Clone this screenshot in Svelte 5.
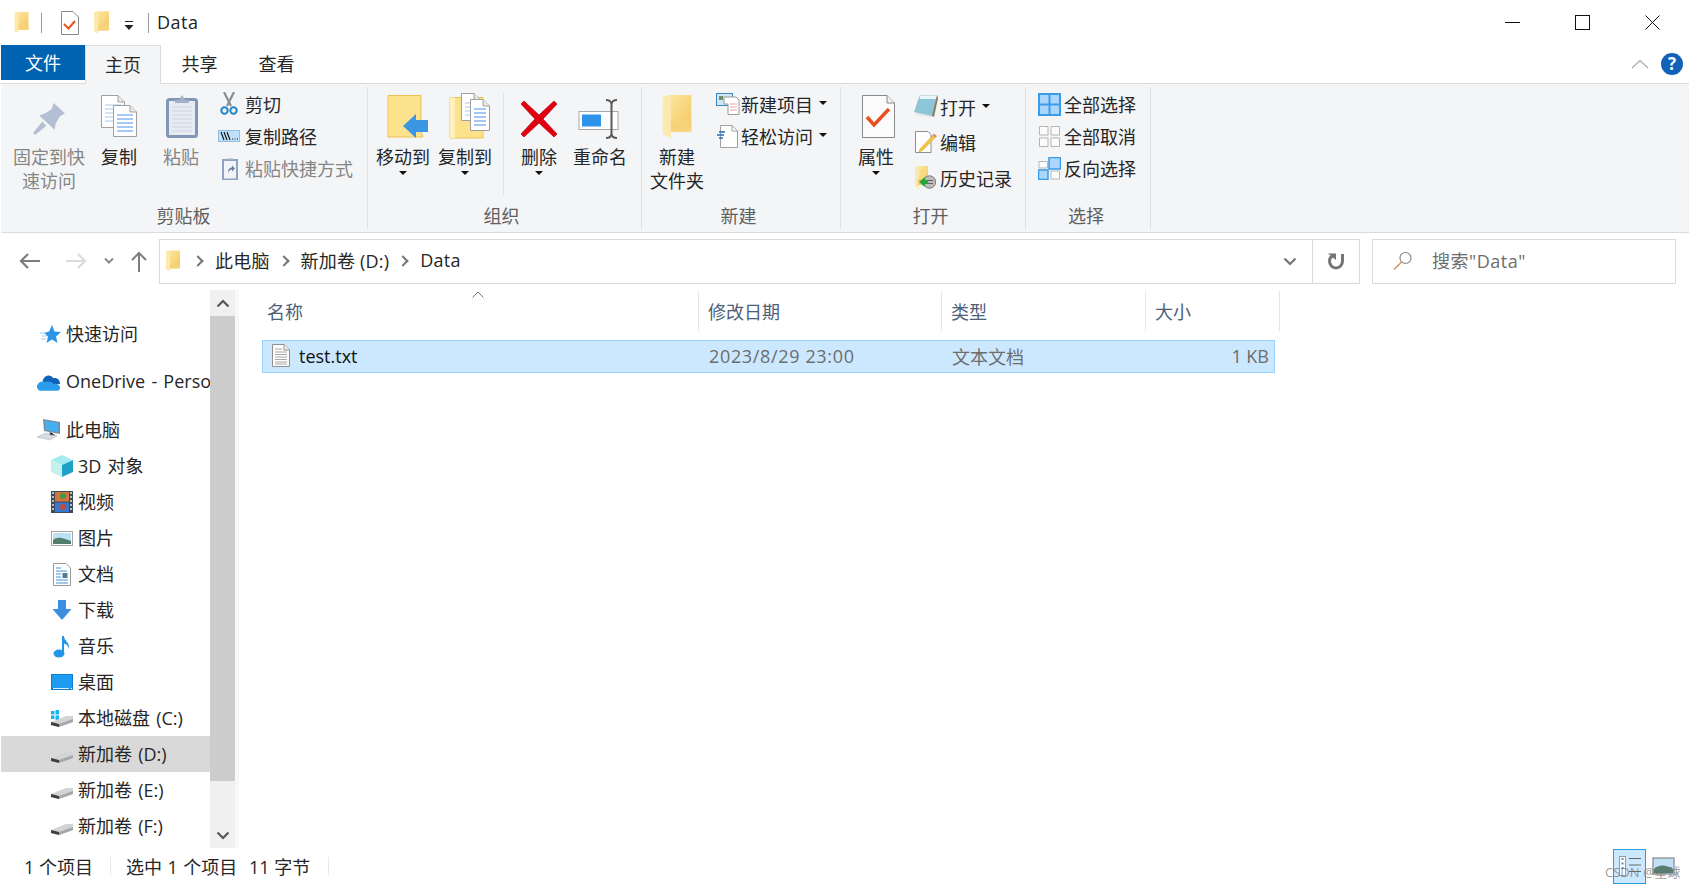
<script>
	const colHeads = [
		{ label: '名称', cls: 'c-name' },
		{ label: '修改日期', cls: 'c-date' },
		{ label: '类型', cls: 'c-type' },
		{ label: '大小', cls: 'c-size' }
	];
</script>

{#snippet folder(w, h)}
	<svg width={w} height={h} viewBox="0 0 28 42">
		<path d="M6 0H28V30H6z" fill="url(#fold)" />
		<path d="M20 30H28V35L8 36V30z" fill="#f2cd70" />
		<path d="M0 1.5L8 0V42L0 38z" fill="#fde9ae" />
		<path d="M8 26H28V36H8z" fill="#f6d27a" />
	</svg>
{/snippet}

{#snippet pin()}
	<svg width="32" height="32" viewBox="0 0 31 31">
		<path d="M20 0L31 10L26 13L22 20L21 26L6 12L12 10L18 6z" fill="#b3c0d3" />
		<path d="M9 18L0 29L2 31L13 22z" fill="#b3c0d3" />
	</svg>
{/snippet}

{#snippet page(x, y, w, h, color)}
	<path d="M{x + 0.5} {y + 0.5}H{x + w - 7}L{x + w - 0.5} {y + 7}V{y + h - 0.5}H{x + 0.5}z" fill="#fff" stroke="#a0a0a0" />
	<path d="M{x + w - 7} {y + 0.5}V{y + 7}H{x + w - 0.5}" fill="#e8e8e8" stroke="#a0a0a0" />
	{#each [10, 14, 18, 22, 26, 30, 34].filter((n) => n < h - 3) as n}
		<path d="M{x + 4} {y + n}H{x + w - 4}" stroke={color} stroke-width="1.4" />
	{/each}
{/snippet}

{#snippet copyIcon()}
	<svg width="38" height="44" viewBox="0 0 38 44">
		{@render page(1, 1, 24, 33, '#c3d7f5')}
		{@render page(13, 11, 24, 32, '#7fb0f2')}
	</svg>
{/snippet}

{#snippet pasteIcon()}
	<svg width="32" height="44" viewBox="0 0 32 44">
		<rect x="1.5" y="5.5" width="29" height="37" rx="2" fill="#e7ebf3" stroke="#8396b6" stroke-width="3" />
		{#each [13, 17, 21, 25, 29, 33, 37] as n}
			<path d="M6 {n}H26" stroke="#cfd6e4" />
		{/each}
		<path d="M9 9V6H13L16 1L19 6H23V9z" fill="#a3b1c8" />
	</svg>
{/snippet}

{#snippet scissors()}
	<svg class="ico-scissors" width="18" height="24" viewBox="0 0 18 24">
		<path d="M4 0L11 14M14 0L7 14" stroke="#8a8f96" stroke-width="2.2" />
		<circle cx="4.500" cy="18.500" r="3.200" fill="none" stroke="#1f86c7" stroke-width="2" />
		<circle cx="13.500" cy="18.500" r="3.200" fill="none" stroke="#1f86c7" stroke-width="2" />
	</svg>
{/snippet}

{#snippet copyPath()}
	<svg width="22" height="12" viewBox="0 0 22 12">
		<rect x="0.5" y="0.5" width="21" height="11" fill="#bfe0f8" stroke="#8fbfe2" />
		<path d="M3 2L6 10M6 2L9 10M9 2L12 10" stroke="#111" stroke-width="1.1" />
		<path d="M14 9h1M16.500 9h1M19 9h1" stroke="#111" />
	</svg>
{/snippet}

{#snippet shortcut()}
	<svg class="ico-shortcut" width="16" height="23" viewBox="0 0 16 23">
		<rect x="1" y="3" width="14" height="19.500" fill="#f0f3f8" stroke="#8fa3c0" stroke-width="2" />
		<path d="M5 3V1.500H11V3z" fill="#9fb0c8" />
		<path d="M6 16C6 12 8 10.500 10 10.500V8.500L13 11.500L10 14.500V12.500C8 12.500 7 14 6 16z" fill="#6d7f98" />
	</svg>
{/snippet}

{#snippet moveIcon()}
	<svg width="42" height="44" viewBox="0 0 42 44">
		<path d="M1 1.500H34V38L36 43H1z" fill="#fde28e" stroke="#e8c552" />
		<path d="M16 32L29 20V26H41V38H29V44z" fill="#3b97e4" />
	</svg>
{/snippet}

{#snippet copyToIcon()}
	<svg width="42" height="46" viewBox="0 0 42 46">
		<path d="M1 4.500H34V45H1z" fill="#fde28e" stroke="#e8c552" />
		<path d="M1 4.500H6V45H1z" fill="#fff0bc" />
		{@render page(12, 0, 20, 28, '#c3d7f5')}
		{@render page(21, 6, 20, 32, '#7fb0f2')}
	</svg>
{/snippet}

{#snippet deleteIcon()}
	<svg width="38" height="38" viewBox="0 0 38 38">
		<path d="M4 1L19 15L34 1L37 4L23 19L37 34L34 37L19 23L4 37L1 34L15 19L1 4z" fill="#e2000f" stroke="#b80010" stroke-width="0.7" />
	</svg>
{/snippet}

{#snippet renameIcon()}
	<svg width="44" height="40" viewBox="0 0 44 40">
		<rect x="1" y="12.500" width="39" height="18" fill="#fff" stroke="#a8a8a8" />
		<rect x="4" y="15.500" width="19" height="12" fill="#2e93e8" />
		<path d="M28 1C31 1 33 2 33.500 5V35C33 38 31 39 28 39M39 1C36 1 34 2 33.500 5M33.500 35C34 38 36 39 39 39" fill="none" stroke="#5a5a5a" stroke-width="2" />
	</svg>
{/snippet}

{#snippet newItem()}
	<svg width="24" height="22" viewBox="0 0 24 22">
		<rect x="0.500" y="0.500" width="16" height="12" fill="#cfe8fa" stroke="#3f86bd" />
		<rect x="3" y="3" width="4" height="4" fill="#6f8f6a" />
		<path d="M8 4H20L23 7V21.500H12V11H8z" fill="#fff" stroke="#9a9a9a" />
		<path d="M14 11H21M14 14H21M14 17H21" stroke="#e2a6a6" />
	</svg>
{/snippet}

{#snippet easyAccess()}
	<svg width="21" height="23" viewBox="0 0 21 23">
		<path d="M3.500 0.500H15L20.500 6V22.500H3.500z" fill="#fff" stroke="#a0a0a0" />
		<path d="M15 0.500V6H20.500" fill="none" stroke="#a0a0a0" />
		<path d="M2 7H8M0 10H7M2 13H6" stroke="#1c6fb8" stroke-width="1.300" />
	</svg>
{/snippet}

{#snippet propsIcon()}
	<svg width="33" height="43" viewBox="0 0 33 43">
		<path d="M0.500 0.500H25L32.500 8V42.500H0.500z" fill="#fbfbfb" stroke="#8a8a8a" />
		<path d="M25 0.500V8H32.500" fill="#eee" stroke="#8a8a8a" />
		<path d="M5 22L12 30L27 14" fill="none" stroke="#e8501e" stroke-width="3.500" />
	</svg>
{/snippet}

{#snippet openIcon()}
	<svg width="24" height="23" viewBox="0 0 24 23">
		<path d="M6 0.500H23L18 21L0.500 17z" fill="#8cc6d8" stroke="#7aa" stroke-width="0.500" />
		<path d="M6 0.500H23L22 4H5.500z" fill="#e9f6fb" />
		<path d="M23 0.500L24 3L20 22L18 21z" fill="#8d7752" />
		<path d="M0.500 17L18 21L17 22.500L3 20z" fill="#dfe6ea" />
	</svg>
{/snippet}

{#snippet editIcon()}
	<svg width="22" height="22" viewBox="0 0 22 22">
		<path d="M0.500 0.500H13L16 3.500V21.500H0.500z" fill="#fff" stroke="#8f8f8f" />
		<path d="M19 3L5 18L4 21L7.500 19.500L21.500 5z" fill="#f4c63e" stroke="#cf9f2c" stroke-width="0.500" />
		<path d="M19 3L21.500 5L20.500 6.500L17.800 4.300z" fill="#e87a8a" />
	</svg>
{/snippet}

{#snippet historyIcon()}
	<svg width="21" height="23" viewBox="0 0 21 23">
		<path d="M3 0H13V17H3z" fill="url(#fold)" />
		<path d="M0 1L4 0V23L0 20z" fill="#fde9ae" />
		<path d="M3 13H14V19H3z" fill="#f2cd70" />
		<circle cx="14.500" cy="16" r="6.200" fill="#bdbdbd" stroke="#7c7c7c" />
		<path d="M11 14.500H18M11 17.500H18" stroke="#666" />
		<path d="M4 16L10 11V14H13V18H10V21z" fill="#2aa33a" />
	</svg>
{/snippet}

{#snippet selectAll()}
	<svg width="23" height="23" viewBox="0 0 23 23">
		<path d="M0 0H23V23H0z" fill="#3a9be8" />
		<path d="M2 2H10.500V10.500H2zM12.500 2H21V10.500H12.500zM2 12.500H10.500V21H2zM12.500 12.500H21V21H12.500z" fill="#a9d6fa" />
	</svg>
{/snippet}

{#snippet selectNone()}
	<svg width="21" height="21" viewBox="0 0 21 21">
		<path d="M.5 .5H9V9H.5zM12 .5H20.500V9H12zM.5 12H9V20.500H.5zM12 12H20.500V20.500H12z" fill="#fbfbfb" stroke="#b5b5b5" />
	</svg>
{/snippet}

{#snippet invert()}
	<svg width="23" height="23" viewBox="0 0 23 23">
		<path d="M1 4.500H9.500V11H1zM13 14H21.500V22H13z" fill="#fbfbfb" stroke="#b5b5b5" />
		<path d="M11 .5H22.500V12H11zM.5 13H10V22.500H.5z" fill="#a9d6fa" stroke="#3a9be8" stroke-width="1.500" />
	</svg>
{/snippet}

{#snippet quick()}
	<svg width="24" height="24" viewBox="0 0 24 24">
		<path d="M15 3L17.500 9.500L24 10L19 14.500L20.500 21L15 17.500L9.500 21L11 14.500L7 11L12 9.500z" fill="#2b95e9" />
		<path d="M3 11H9M5 14H10M4 17H9" stroke="#9dcff5" stroke-width="1.200" />
	</svg>
{/snippet}

{#snippet onedrive()}
	<svg width="26" height="20" viewBox="0 0 26 20">
		<path d="M7 9C8 3 15 1 18 6C22 5 25 8 25 12H7z" fill="#0f62b8" />
		<path d="M5 19C1 19 0 14 2 12C4 9 8 9 10 10C13 9 17 10 18 12C22 11 25 13 25 16C25 18 24 19 22 19z" fill="#2a9ceb" />
	</svg>
{/snippet}

{#snippet pc()}
	<svg width="25" height="22" viewBox="0 0 25 22">
		<path d="M7 0L24 3V15L8 12z" fill="#7c8b99" />
		<path d="M8.500 1.500L22.500 4V13.500L9.500 11z" fill="#45b0f0" />
		<path d="M1 18L10 14L21 17L14 21z" fill="#d8dde2" stroke="#a8b0b8" stroke-width="0.500" />
		<path d="M14 13V16H19" stroke="#8d99a5" />
	</svg>
{/snippet}

{#snippet cube()}
	<svg width="22" height="22" viewBox="0 0 22 22">
		<path d="M11 0L22 5L11 10L0 5z" fill="#a5ecf0" />
		<path d="M0 5L11 10V22L0 17z" fill="#c3f1ee" />
		<path d="M22 5L11 10V22L22 17z" fill="#1ea2c8" />
	</svg>
{/snippet}

{#snippet video()}
	<svg width="22" height="22" viewBox="0 0 22 22">
		<rect width="22" height="22" fill="#3d4a57" />
		<rect x="4" y="1" width="14" height="9.500" fill="#d9743b" />
		<rect x="4" y="11.500" width="14" height="9.500" fill="#3a78cf" />
		<circle cx="12" cy="5" r="3" fill="#3c9b46" />
		<circle cx="12" cy="16" r="3" fill="#c24a3a" />
		<path d="M1 2h2M1 6h2M1 10h2M1 14h2M1 18h2M19 2h2M19 6h2M19 10h2M19 14h2M19 18h2" stroke="#e6e6e6" stroke-width="1.500" />
	</svg>
{/snippet}

{#snippet picture()}
	<svg width="22" height="15" viewBox="0 0 22 15">
		<rect x="0.500" y="0.500" width="21" height="14" fill="#fff" stroke="#a5a5a5" />
		<rect x="2" y="2" width="18" height="11" fill="#bfe0f2" />
		<path d="M2 9C7 5 12 7 20 10V13H2z" fill="#4f7f6c" />
	</svg>
{/snippet}

{#snippet docIcon()}
	<svg width="18" height="23" viewBox="0 0 18 23">
		<path d="M.5 .5H13L17.500 5V22.500H.5z" fill="#fff" stroke="#9a9a9a" />
		<path d="M3 5H8M3 8H14M3 11H8M3 14H8M3 17H15M3 20H15" stroke="#3f98dc" />
		<rect x="9.500" y="10" width="5" height="5" fill="#567d8a" />
	</svg>
{/snippet}

{#snippet downIcon()}
	<svg width="20" height="20" viewBox="0 0 20 20">
		<path d="M6 0H14V9H19.500L10 20L.5 9H6z" fill="#3c8fe0" />
	</svg>
{/snippet}

{#snippet music()}
	<svg width="18" height="23" viewBox="0 0 18 23">
		<ellipse cx="6" cy="18.500" rx="5.500" ry="4" fill="#1f97e6" />
		<path d="M9 1H11C11 6 17 7 16 14C15 10 13 9 11 8.500V18H9z" fill="#1f97e6" />
	</svg>
{/snippet}

{#snippet desktop()}
	<svg width="22" height="16" viewBox="0 0 22 16">
		<rect width="22" height="16" fill="#0f7ed6" />
		<path d="M1 1H21V14H1z" fill="#1e9df0" />
		<path d="M2 14.500H18M19.500 14.500H21" stroke="#d6eefc" />
	</svg>
{/snippet}

{#snippet drive(win)}
	<svg width="22" height="18" viewBox="0 0 22 18">
		{#if win}
			<path d="M0 2H3.500V5.500H0zM4.500 1H8V5.500H4.500zM0 6.500H3.500V10H0zM4.500 6.500H8V11H4.500z" fill="#19b3ec" />
		{/if}
		<path d="M0 13L15 7H22V13L8 18L0 16z" fill="#d2d3d4" />
		<path d="M0 13L8 15V18L0 16z" fill="#3d3d3d" />
		<path d="M8 15L22 10V13L8 18z" fill="#a4a6a8" />
	</svg>
{/snippet}

{#snippet caret()}
	<span class="caret"></span>
{/snippet}

{#snippet smallBtn(icon, label, disabled)}
	<div class="small" class:disabled>
		<span class="small-ico">{@render icon()}</span>
		<span>{label}</span>
	</div>
{/snippet}

{#snippet navRow(icon, label, sub, selected)}
	<div class="nav-row" class:sub class:selected>
		<span class="nav-ico">{@render icon()}</span>
		<span class="nav-label">{label}</span>
	</div>
{/snippet}

<svg class="defs" width="0" height="0">
	<defs>
		<linearGradient id="fold" x1="0" y1="0" x2="1" y2="1">
			<stop offset="0" stop-color="#fde79f" />
			<stop offset="1" stop-color="#f4c964" />
		</linearGradient>
	</defs>
</svg>

<div class="window">
	<header class="titlebar">
		<div class="qat">
			{@render folder(15, 21)}
			<span class="qsep first"></span>
			<svg class="q-doc" width="18" height="24" viewBox="0 0 18 24">
				<path d="M.5 .5H12L17.500 6V23.500H.5z" fill="#fff" stroke="#8a8a8a" />
				<path d="M3 13L7.500 17.500L14 10" fill="none" stroke="#e8501e" stroke-width="2" />
			</svg>
			<span class="q-fold">{@render folder(15, 23)}</span>
			<svg class="q-drop" width="12" height="12" viewBox="0 0 12 12">
				<path d="M2 1.500H10" stroke="#222" />
				<path d="M1.500 5H10.500L6 10z" fill="#222" />
			</svg>
			<span class="qsep second"></span>
			<span class="title">Data</span>
		</div>
		<div class="win-btns">
			<svg width="15" height="15" viewBox="0 0 15 15"><path d="M0 7.500H15" stroke="#111" /></svg>
			<svg width="15" height="15" viewBox="0 0 15 15"><rect x=".5" y=".5" width="14" height="14" fill="none" stroke="#111" /></svg>
			<svg width="15" height="15" viewBox="0 0 15 15"><path d="M.5 .5L14.500 14.500M14.500 .5L.5 14.500" stroke="#111" /></svg>
		</div>
	</header>

	<nav class="tabs">
		<div class="tab file">文件</div>
		<div class="tab active">主页</div>
		<div class="tab">共享</div>
		<div class="tab">查看</div>
		<div class="tab-right">
			<svg width="18" height="10" viewBox="0 0 18 10"><path d="M1 9L9 1.500L17 9" fill="none" stroke="#b5b5b5" stroke-width="1.500" /></svg>
			<span class="help">?</span>
		</div>
	</nav>

	<section class="ribbon">
		<div class="group clip">
			<div class="group-body">
				<div class="big pin-btn low disabled"><span class="big-ico">{@render pin()}</span><span>固定到快<br />速访问</span></div>
				<div class="big copy-btn"><span class="big-ico">{@render copyIcon()}</span><span>复制</span></div>
				<div class="big paste-btn disabled"><span class="big-ico">{@render pasteIcon()}</span><span>粘贴</span></div>
				<div class="small-col">
					{@render smallBtn(scissors, '剪切', false)}
					{@render smallBtn(copyPath, '复制路径', false)}
					{@render smallBtn(shortcut, '粘贴快捷方式', true)}
				</div>
			</div>
			<div class="group-label">剪贴板</div>
		</div>

		<div class="group org">
			<div class="group-body">
				<div class="big move-btn"><span class="big-ico">{@render moveIcon()}</span><span>移动到</span>{@render caret()}</div>
				<div class="big move-btn"><span class="big-ico">{@render copyToIcon()}</span><span>复制到</span>{@render caret()}</div>
				<span class="inner-sep"></span>
				<div class="big del-btn low"><span class="big-ico">{@render deleteIcon()}</span><span>删除</span>{@render caret()}</div>
				<div class="big ren-btn low"><span class="big-ico">{@render renameIcon()}</span><span>重命名</span></div>
			</div>
			<div class="group-label">组织</div>
		</div>

		<div class="group new">
			<div class="group-body">
				<div class="big newf-btn"><span class="big-ico">{@render folder(30, 43)}</span><span>新建<br />文件夹</span></div>
				<div class="small-col">
					<div class="small"><span class="small-ico">{@render newItem()}</span><span>新建项目</span>{@render caret()}</div>
					<div class="small"><span class="small-ico">{@render easyAccess()}</span><span>轻松访问</span>{@render caret()}</div>
				</div>
			</div>
			<div class="group-label">新建</div>
		</div>

		<div class="group open">
			<div class="group-body">
				<div class="big prop-btn"><span class="big-ico">{@render propsIcon()}</span><span>属性</span>{@render caret()}</div>
				<div class="small-col tall">
					<div class="small"><span class="small-ico">{@render openIcon()}</span><span>打开</span>{@render caret()}</div>
					{@render smallBtn(editIcon, '编辑', false)}
					{@render smallBtn(historyIcon, '历史记录', false)}
				</div>
			</div>
			<div class="group-label">打开</div>
		</div>

		<div class="group sel">
			<div class="group-body">
				<div class="small-col">
					{@render smallBtn(selectAll, '全部选择', false)}
					{@render smallBtn(selectNone, '全部取消', false)}
					{@render smallBtn(invert, '反向选择', false)}
				</div>
			</div>
			<div class="group-label">选择</div>
		</div>
	</section>

	<div class="addr-row">
		<div class="arrows">
			<svg width="22" height="18" viewBox="0 0 22 18"><path d="M21 9H2M9 2L2 9L9 16" fill="none" stroke="#7d7d7d" stroke-width="2.200" /></svg>
			<svg class="fwd" width="22" height="18" viewBox="0 0 22 18"><path d="M1 9H20M13 2L20 9L13 16" fill="none" stroke="#dcdcdc" stroke-width="2.200" /></svg>
			<svg class="hist" width="12" height="8" viewBox="0 0 12 8"><path d="M2 1.500L6 5.500L10 1.500" fill="none" stroke="#8a8a8a" stroke-width="2" /></svg>
			<svg class="up" width="18" height="21" viewBox="0 0 18 21"><path d="M9 21V2M2 9L9 2L16 9" fill="none" stroke="#7d7d7d" stroke-width="2" /></svg>
		</div>
		<div class="addr">
			<span class="addr-fold">{@render folder(14, 22)}</span>
			<span class="crumb-arrow"></span><span class="crumb">此电脑</span>
			<span class="crumb-arrow"></span><span class="crumb">新加卷 (D:)</span>
			<span class="crumb-arrow"></span><span class="crumb">Data</span>
			<svg class="addr-drop" width="14" height="9" viewBox="0 0 14 9"><path d="M1.500 1.500L7 7L12.500 1.500" fill="none" stroke="#757575" stroke-width="2.200" /></svg>
			<div class="refresh">
				<svg width="18" height="18" viewBox="0 0 18 18"><path d="M15.500 2V9C15.500 13 12.500 16 9 16C5.500 16 2.500 13 2.500 9C2.500 6.500 4 4.500 6.500 3.500" fill="none" stroke="#757575" stroke-width="3" /><path d="M1 1.500H9V8z" fill="#757575" /></svg>
			</div>
		</div>
		<div class="search">
			<svg width="20" height="20" viewBox="0 0 20 20"><circle cx="12.500" cy="7" r="5.500" fill="none" stroke="#8a8a8a" stroke-width="1.200" /><path d="M8.500 11L1 18.500" stroke="#c98c5e" stroke-width="1.200" /></svg>
			<span class="search-text">搜索"Data"</span>
		</div>
	</div>

	<main class="content">
		<aside class="sidebar">
			<div class="nav">
				<div class="nav-group">{@render navRow(quick, '快速访问', false, false)}</div>
				<div class="nav-group">{@render navRow(onedrive, 'OneDrive - Personal', false, false)}</div>
				<div class="nav-group">
					{@render navRow(pc, '此电脑', false, false)}
					{@render navRow(cube, '3D 对象', true, false)}
					{@render navRow(video, '视频', true, false)}
					{@render navRow(picture, '图片', true, false)}
					{@render navRow(docIcon, '文档', true, false)}
					{@render navRow(downIcon, '下载', true, false)}
					{@render navRow(music, '音乐', true, false)}
					{@render navRow(desktop, '桌面', true, false)}
					{#snippet driveC()}{@render drive(true)}{/snippet}
					{#snippet driveD()}{@render drive(false)}{/snippet}
					{@render navRow(driveC, '本地磁盘 (C:)', true, false)}
					{@render navRow(driveD, '新加卷 (D:)', true, true)}
					{@render navRow(driveD, '新加卷 (E:)', true, false)}
					{@render navRow(driveD, '新加卷 (F:)', true, false)}
				</div>
			</div>
			<div class="scrollbar">
				<div class="sb-btn"><svg width="14" height="9" viewBox="0 0 14 9"><path d="M1.500 7.500L7 2L12.500 7.500" fill="none" stroke="#555" stroke-width="2.200" /></svg></div>
				<div class="sb-thumb"></div>
				<div class="sb-track"></div>
				<div class="sb-btn"><svg width="14" height="9" viewBox="0 0 14 9"><path d="M1.500 1.500L7 7L12.500 1.500" fill="none" stroke="#555" stroke-width="2.200" /></svg></div>
			</div>
		</aside>

		<section class="files">
			<div class="file-head">
				{#each colHeads as col}
					<div class="col {col.cls}">{col.label}</div>
				{/each}
				<svg class="sort" width="12" height="7" viewBox="0 0 12 7"><path d="M.5 6.500L6 1L11.500 6.500" fill="none" stroke="#777" /></svg>
			</div>
			<div class="file-row">
				<div class="cell c-name name-cell">
					<svg width="18" height="23" viewBox="0 0 18 23">
						<path d="M.5 .5H12L17.500 6V22.500H.5z" fill="#fdfdfd" stroke="#8f8f8f" />
						<path d="M12 .5V6H17.500" fill="#eee" stroke="#8f8f8f" />
						<path d="M3 5H10M3 8H15M3 10.500H15M3 13H15M3 15.500H15M3 18H15M3 20H15" stroke="#a8a8a8" />
					</svg>
					<span>test.txt</span>
				</div>
				<div class="cell c-date muted">2023/8/29 23:00</div>
				<div class="cell c-type muted">文本文档</div>
				<div class="cell c-size muted">1 KB</div>
			</div>
		</section>
	</main>

	<footer class="status">
		<span class="st first">1 个项目</span>
		<span class="st-sep"></span>
		<span class="st second">选中 1 个项目</span>
		<span class="st third">11 字节</span>
		<span class="st-sep"></span>
		<div class="views">
			<div class="view on">
				<svg width="24" height="24" viewBox="0 0 24 24">
					<rect x="1.500" y="2.500" width="6" height="19" fill="#fff" stroke="#9a9a9a" />
					<path d="M3.500 5h2M3.500 9.500h2M3.500 14h2" stroke="#5b8fb5" stroke-width="2" />
					<path d="M11 4.500H23M11 11H23M11 17.500H23" stroke="#666" />
				</svg>
			</div>
			<svg class="view-large" width="23" height="18" viewBox="0 0 23 18">
				<rect x="1" y="1" width="21" height="16" fill="#bfe0f5" stroke="#9b9b9b" stroke-width="1.500" />
				<path d="M2 12C8 7 14 8 21 12V16H2z" fill="#4f7f6c" />
			</svg>
			<span class="watermark">CSDN @星球</span>
		</div>
	</footer>
</div>

<style>
	:global(body) {
		background: #fff;
	}

	.defs {
		position: absolute;
	}

	.window {
		width: 1689px;
		height: 884px;
		display: flex;
		flex-direction: column;
		overflow: hidden;
		font-family: 'Open Sans', 'Noto Sans CJK SC', sans-serif;
		font-size: 18px;
		color: #262626;
		background: #fff;
	}

	/* title bar */
	.titlebar {
		height: 45px;
		flex-shrink: 0;
		display: flex;
		align-items: center;
		justify-content: space-between;
	}

	.qat {
		display: flex;
		align-items: center;
		padding-left: 14px;
	}

	.qsep {
		width: 1px;
		height: 20px;
		background: #9a9a9a;
	}

	.qsep.first {
		margin-left: 12px;
	}

	.q-doc {
		margin-left: 19px;
	}

	.q-fold {
		margin-left: 15px;
		display: flex;
	}

	.q-drop {
		margin-left: 14px;
		margin-top: 6px;
	}

	.qsep.second {
		margin-left: 13px;
	}

	.title {
		margin-left: 8px;
		padding-bottom: 2px;
		letter-spacing: 0.5px;
		color: #222;
	}

	.win-btns {
		display: flex;
		gap: 55px;
		padding-right: 29px;
		align-items: center;
	}

	/* tabs */
	.tabs {
		height: 38px;
		flex-shrink: 0;
		display: flex;
		padding-left: 1px;
		border-bottom: 1px solid #dadbdc;
		position: relative;
	}

	.tab {
		width: 77px;
		height: 36px;
		padding-bottom: 2px;
		display: flex;
		align-items: center;
		justify-content: center;
	}

	.tab.file {
		width: 84px;
		height: 33px;
		background: #0063b1;
		color: #fff;
	}

	.tab.active {
		width: 76px;
		height: 39px;
		padding-bottom: 3px;
		background: #f4f5f7;
		border: 1px solid #dadbdc;
		border-bottom: none;
		box-sizing: border-box;
	}

	.tab-right {
		margin-left: auto;
		display: flex;
		align-items: center;
		gap: 12px;
		padding-right: 6px;
	}

	.help {
		width: 22px;
		height: 22px;
		border-radius: 50%;
		background: #0f62b8;
		color: #fff;
		font-weight: 700;
		font-size: 17px;
		line-height: 22px;
		text-align: center;
	}

	/* ribbon */
	.ribbon {
		height: 149px;
		flex-shrink: 0;
		box-sizing: border-box;
		margin-left: 1px;
		padding-top: 3px;
		display: flex;
		background: #f4f5f7;
		border-bottom: 1px solid #dadbdc;
	}

	.group {
		height: 142px;
		box-sizing: border-box;
		display: flex;
		flex-direction: column;
		border-right: 1px solid #dfe0e2;
	}

	.group.clip {
		width: 367px;
		padding-left: 9px;
	}

	.group.org {
		width: 274px;
		padding-left: 4px;
	}

	.group.new {
		width: 199px;
		padding-left: 5px;
	}

	.group.open {
		width: 185px;
		padding-left: 5px;
	}

	.group.sel {
		width: 125px;
		padding-left: 8px;
	}

	.group-body {
		flex: 1;
		display: flex;
		min-height: 0;
	}

	.group-label {
		height: 22px;
		padding-bottom: 2px;
		line-height: 22px;
		text-align: center;
		color: #5f5f5f;
		margin-left: -10px;
	}

	.group.sel .group-label {
		margin-left: -12px;
	}

	.big {
		display: flex;
		flex-direction: column;
		align-items: center;
		text-align: center;
		line-height: 24px;
		padding-top: 3px;
		flex-shrink: 0;
	}

	.big-ico {
		height: 52px;
		margin-bottom: 3px;
		display: flex;
		align-items: center;
		justify-content: center;
	}

	.big.low .big-ico {
		margin-top: 3px;
		margin-bottom: 0;
	}

	.pin-btn {
		width: 78px;
	}

	.copy-btn,
	.paste-btn,
	.move-btn {
		width: 62px;
	}

	.move-btn .big-ico {
		padding-left: 9px;
	}

	.paste-btn .big-ico {
		padding-left: 2px;
	}

	.del-btn {
		width: 56px;
	}

	.ren-btn {
		width: 66px;
	}

	.newf-btn {
		width: 60px;
	}

	.prop-btn {
		width: 60px;
	}

	.prop-btn .big-ico {
		padding-left: 4px;
	}

	.disabled {
		color: #858585;
	}

	.inner-sep {
		width: 1px;
		height: 102px;
		margin: 6px 7px 0;
		background: #dfe0e2;
	}

	.caret {
		display: inline-block;
		width: 0;
		height: 0;
		border-left: 4px solid transparent;
		border-right: 4px solid transparent;
		border-top: 4px solid #111;
	}

	.big .caret {
		margin-top: 2px;
	}

	.small-col {
		display: flex;
		flex-direction: column;
		padding-top: 1px;
	}

	.small-col.tall {
		padding-top: 2px;
		margin-left: 5px;
	}

	.small {
		height: 32px;
		display: flex;
		align-items: center;
		white-space: nowrap;
	}

	.small .caret {
		margin-left: 6px;
		margin-top: -2px;
	}

	.small-ico {
		width: 27px;
		display: flex;
		justify-content: center;
		align-items: center;
	}

	.clip .small-col {
		margin-left: 6px;
	}

	.new .small-col {
		margin-left: 7px;
	}

	.clip .small-ico {
		justify-content: flex-start;
	}

	.ico-scissors {
		margin-left: 2px;
	}

	.ico-shortcut {
		margin-left: 4px;
	}

	.tall .small-ico {
		width: 29px;
	}

	.sel .small-ico {
		width: 30px;
	}

	.tall .small {
		height: 35.500px;
	}

	/* address bar */
	.addr-row {
		height: 57px;
		flex-shrink: 0;
		display: flex;
		align-items: center;
		padding-left: 19px;
		padding-bottom: 1px;
		box-sizing: border-box;
	}

	.arrows {
		width: 140px;
		display: flex;
		align-items: center;
	}

	.fwd {
		margin-left: 24px;
	}

	.hist {
		margin-left: 16px;
	}

	.up {
		margin-left: 15px;
	}

	.addr,
	.search {
		height: 45px;
		box-sizing: border-box;
		border: 1px solid #d9d9d9;
		display: flex;
		align-items: center;
	}

	.addr {
		width: 1201px;
		padding-left: 6px;
		position: relative;
	}

	.addr-fold {
		display: flex;
		margin-right: 15px;
	}

	.crumb-arrow {
		width: 6px;
		height: 6px;
		border-top: 2px solid #777;
		border-right: 2px solid #777;
		transform: rotate(45deg);
		margin-right: 13px;
		margin-left: -1px;
		flex-shrink: 0;
	}

	.crumb {
		margin-right: 11px;
		padding-bottom: 2px;
		letter-spacing: 0.2px;
	}

	.addr-drop {
		margin-left: auto;
		margin-right: 15px;
	}

	.refresh {
		width: 46px;
		height: 100%;
		border-left: 1px solid #d9d9d9;
		display: flex;
		align-items: center;
		justify-content: center;
	}

	.search {
		width: 304px;
		margin-left: 12px;
		padding-left: 20px;
		gap: 19px;
		color: #6d6d6d;
	}

	.search-text {
		padding-bottom: 2px;
		letter-spacing: 0.5px;
	}

	/* main */
	.content {
		flex: 1;
		min-height: 0;
		display: flex;
	}

	.sidebar {
		width: 239px;
		flex-shrink: 0;
		display: flex;
		box-sizing: border-box;
		border-right: 4px solid #f8f8f8;
		padding-left: 1px;
	}

	.nav {
		width: 209px;
		flex-shrink: 0;
		overflow: hidden;
		padding-top: 26px;
	}

	.nav-group {
		margin-bottom: 12px;
	}

	.nav-row {
		height: 36px;
		display: flex;
		align-items: center;
		padding-left: 35px;
		white-space: nowrap;
		overflow: hidden;
		word-spacing: 1.500px;
	}

	.nav-row.sub {
		padding-left: 49px;
	}

	.nav-row.selected {
		background: #d9d9d9;
	}

	.nav-label {
		padding-bottom: 2px;
	}

	.nav-ico {
		width: 25px;
		flex-shrink: 0;
		margin-right: 5px;
		display: flex;
		align-items: center;
		justify-content: center;
	}

	.sub .nav-ico {
		width: 24px;
		margin-right: 4px;
	}

	.scrollbar {
		width: 25px;
		display: flex;
		flex-direction: column;
		background: #f0f0f0;
	}

	.sb-btn {
		height: 26px;
		display: flex;
		align-items: center;
		justify-content: center;
		flex-shrink: 0;
	}

	.sb-thumb {
		height: 465px;
		background: #cdcdcd;
	}

	.sb-track {
		flex: 1;
	}

	.files {
		flex: 1;
		min-width: 0;
		padding-left: 23px;
	}

	.file-head {
		height: 40px;
		display: flex;
		width: 1019px;
		position: relative;
		margin-top: 1px;
		margin-bottom: 9px;
		color: #4c607a;
	}

	.col {
		box-sizing: border-box;
		padding-left: 9px;
		border-right: 1px solid #e5e5e5;
		display: flex;
		align-items: center;
	}

	.col.c-name {
		padding-left: 5px;
	}

	.c-name {
		width: 437px;
	}

	.c-date {
		width: 243px;
	}

	.c-type {
		width: 204px;
	}

	.c-size {
		width: 134px;
	}

	.sort {
		position: absolute;
		left: 210px;
		top: 0;
	}

	.file-row {
		width: 1013px;
		height: 33px;
		box-sizing: border-box;
		display: flex;
		background: #cce8ff;
		border: 1px solid #99d1ff;
	}

	.cell {
		display: flex;
		align-items: center;
		box-sizing: border-box;
		padding-left: 9px;
		padding-bottom: 2px;
	}

	.name-cell {
		width: 446px;
		gap: 9px;
		color: #111;
	}

	.file-row .c-date {
		width: 243px;
		padding-left: 0;
		letter-spacing: 0.65px;
	}

	.file-row .c-type {
		width: 204px;
		padding-left: 0;
	}

	.file-row .c-size {
		width: 118px;
		justify-content: flex-end;
		padding-right: 5px;
	}

	.muted {
		color: #6d6d6d;
	}

	/* status bar */
	.status {
		height: 36px;
		flex-shrink: 0;
		display: flex;
		align-items: center;
		padding-left: 24px;
	}

	.st {
		padding-bottom: 1px;
	}

	.st.first {
		width: 86px;
	}

	.st.second {
		margin-left: 15px;
		width: 123px;
		word-spacing: 0.8px;
	}

	.st.third {
		width: 79px;
	}

	.st-sep {
		width: 1px;
		height: 18px;
		background: #e8e8e8;
	}

	.views {
		margin-left: auto;
		position: relative;
		display: flex;
		align-items: center;
		gap: 6px;
		padding-right: 14px;
	}

	.view.on {
		width: 33px;
		height: 35px;
		box-sizing: border-box;
		background: #cce8ff;
		border: 1px solid #26a0da;
		display: flex;
		align-items: center;
		justify-content: center;
	}

	.watermark {
		position: absolute;
		left: -8px;
		top: 13px;
		font-size: 13px;
		white-space: nowrap;
		color: rgba(120, 120, 120, 0.75);
	}
</style>
